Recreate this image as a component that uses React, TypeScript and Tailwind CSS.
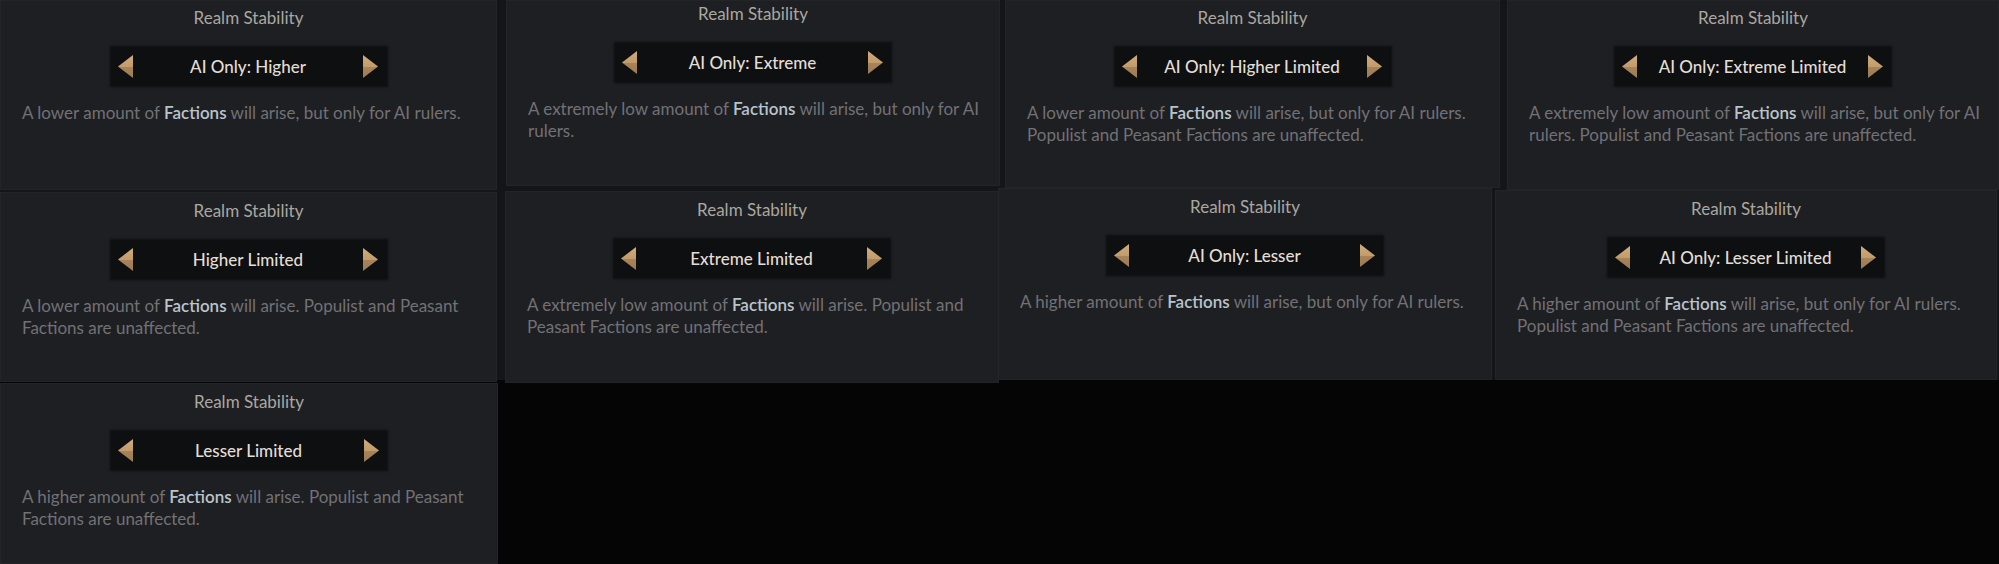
import React from "react";

type P = {
  cls: string;
  value: string;
  lines: string[];
};

const Arrow = ({ dir }: { dir: "l" | "r" }) => (
  <svg width="15" height="23" viewBox="0 0 15 23" className="shrink-0">
    <defs>
      <linearGradient id={"g" + dir} x1="0" y1="0" x2="0" y2="1">
        <stop offset="0" stopColor="#d1ab7b" />
        <stop offset="0.5" stopColor="#c39c6c" />
        <stop offset="0.51" stopColor="#a9845a" />
        <stop offset="1" stopColor="#9c7a53" />
      </linearGradient>
    </defs>
    {dir === "l" ? (
      <polygon points="15,0 0,11.5 15,23" fill={"url(#g" + dir + ")"} />
    ) : (
      <polygon points="0,0 15,11.5 0,23" fill={"url(#g" + dir + ")"} />
    )}
  </svg>
);

const Line = ({ text }: { text: string }) => {
  if (text.includes("{F}")) {
    const [a, b] = text.split("{F}");
    return (
      <div className="whitespace-nowrap">
        {a}
        <span className="text-[#b9c3cb] font-semibold">Factions</span>
        {b}
      </div>
    );
  }
  return <div className="whitespace-nowrap">{text}</div>;
};

const Panel = ({ p }: { p: P }) => (
  <div
    className={
      "shrink-0 flex flex-col bg-[#1e1f23] border border-[#232428] overflow-hidden " +
      p.cls
    }
  >
    <div className="text-center text-[17px] leading-[20px] text-[#aaa7a1]">Realm Stability</div>
    <div className="mt-[19px] self-center w-[276px] h-[39px] bg-[#0e0f11] flex items-center justify-between pl-[7px] pr-[8px] shadow-[0_0_2px_1px_rgba(10,10,12,0.8)]">
      <Arrow dir="l" />
      <div className="text-[17px] leading-[20px] font-medium text-[#e2ded6]">{p.value}</div>
      <Arrow dir="r" />
    </div>
    <div className="mt-[16px] px-[21px] text-[17px] leading-[22px] text-[#727175]">
      {p.lines.map((l, i) => (
        <Line key={i} text={l} />
      ))}
    </div>
  </div>
);

const row1: P[] = [
  {
    cls: "w-[497px] h-[190px] pt-[7px]",
    value: "AI Only: Higher",
    lines: ["A lower amount of {F} will arise, but only for AI rulers."],
  },
  {
    cls: "ml-[9px] w-[494px] h-[186px] pt-[3px]",
    value: "AI Only: Extreme",
    lines: ["A extremely low amount of {F} will arise, but only for AI", "rulers."],
  },
  {
    cls: "ml-[5px] w-[495px] h-[188px] pt-[7px]",
    value: "AI Only: Higher Limited",
    lines: [
      "A lower amount of {F} will arise, but only for AI rulers.",
      "Populist and Peasant Factions are unaffected.",
    ],
  },
  {
    cls: "ml-[7px] w-[492px] h-[190px] pt-[7px]",
    value: "AI Only: Extreme Limited",
    lines: [
      "A extremely low amount of {F} will arise, but only for AI",
      "rulers. Populist and Peasant Factions are unaffected.",
    ],
  },
];

const row2: P[] = [
  {
    cls: "mt-[2px] w-[497px] h-[190px] pt-[8px]",
    value: "Higher Limited",
    lines: ["A lower amount of {F} will arise. Populist and Peasant", "Factions are unaffected."],
  },
  {
    cls: "mt-[1px] ml-[8px] w-[494px] h-[192px] pt-[8px]",
    value: "Extreme Limited",
    lines: ["A extremely low amount of {F} will arise. Populist and", "Peasant Factions are unaffected."],
  },
  {
    cls: "-mt-[2px] ml-[-1px] w-[494px] h-[192px] pt-[8px]",
    value: "AI Only: Lesser",
    lines: ["A higher amount of {F} will arise, but only for AI rulers."],
  },
  {
    cls: "ml-[3px] w-[502px] h-[190px] pt-[8px]",
    value: "AI Only: Lesser Limited",
    lines: [
      "A higher amount of {F} will arise, but only for AI rulers.",
      "Populist and Peasant Factions are unaffected.",
    ],
  },
];

const p9: P = {
  cls: "w-[498px] h-[181px] pt-[8px]",
  value: "Lesser Limited",
  lines: ["A higher amount of {F} will arise. Populist and Peasant", "Factions are unaffected."],
};

export default function App() {
  return (
    <div
      className="w-[1999px] h-[564px] overflow-hidden bg-[#050505] flex flex-col"
      style={{ fontFamily: "Lato, 'Open Sans', sans-serif" }}
    >
      <div className="flex items-start bg-[#141518] h-[190px] shrink-0">
        {row1.map((p, i) => (
          <Panel key={i} p={p} />
        ))}
      </div>
      <div className="flex items-start h-[193px] shrink-0 bg-[linear-gradient(#141518,#141518)] bg-no-repeat bg-[length:100%_190px]">
        {row2.map((p, i) => (
          <Panel key={i} p={p} />
        ))}
      </div>
      <div className="flex items-start shrink-0">
        <Panel p={p9} />
      </div>
    </div>
  );
}
